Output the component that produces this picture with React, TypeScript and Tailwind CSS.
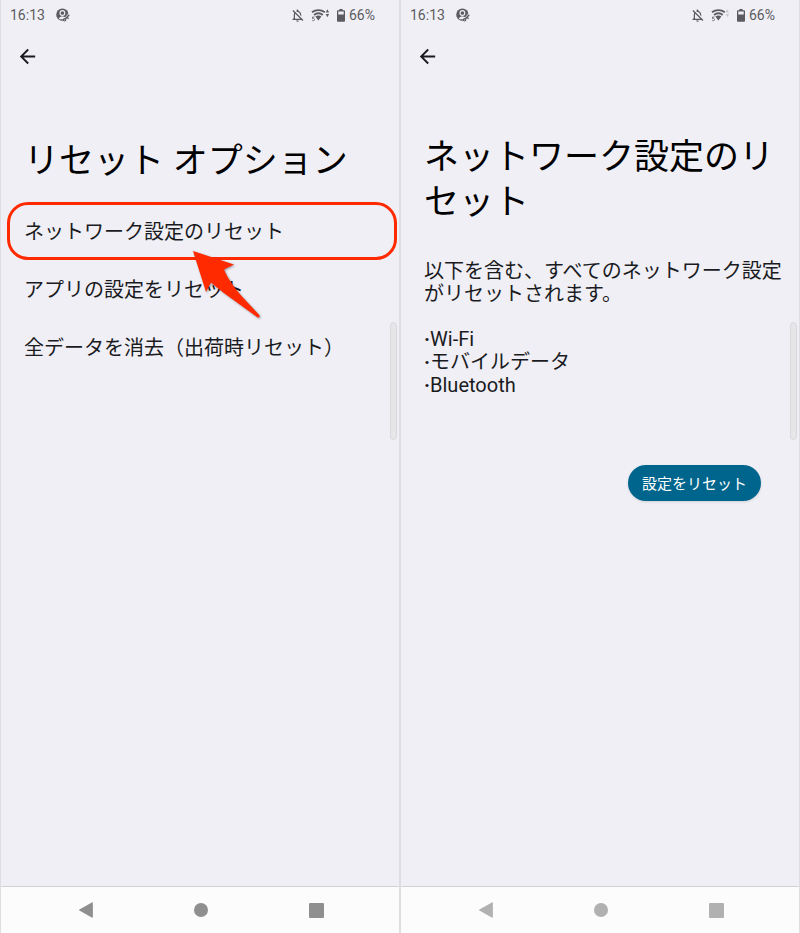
import { ReactNode } from "react";
import { MdArrowBack, MdOutlineNotificationsOff } from "react-icons/md";

type PhoneProps = {
  children: ReactNode;
  wifiActive?: boolean;
  navClassName: string;
};

const resetOptions = [
  { id: "network", label: "ネットワーク設定のリセット", highlighted: true },
  { id: "apps", label: "アプリの設定をリセット" },
  { id: "factory", label: "全データを消去（出荷時リセット）" },
];

const resetTargets = ["Wi-Fi", "モバイルデータ", "Bluetooth"];

const ProfileIcon = () => (
  <svg width="14" height="14" viewBox="0 0 14 14" fill="none">
    <circle cx="6.4" cy="6.7" r="6.2" fill="currentColor" />
    <circle cx="6.4" cy="5" r="2.4" stroke="#f0eff5" strokeWidth="1.1" />
    <path
      d="M2.8 10.4c.9-1.5 2.1-2 3.6-2s2.7.5 3.6 2c-1.6 1.2-5.6 1.2-7.2 0Z"
      fill="#f0eff5"
    />
    <path d="M7.8 13.6 14 6.2" stroke="#f0eff5" strokeWidth="3.4" />
    <path d="M8.8 11.4 13.2 6.8" stroke="currentColor" strokeWidth="1.5" />
    <circle cx="8.6" cy="11.8" r="1.2" stroke="currentColor" strokeWidth="1.1" />
    <path d="m11 9.2 1.6 1.6" stroke="currentColor" strokeWidth="1.3" />
  </svg>
);

const WifiIcon = ({ active }: { active: boolean }) => (
  <svg width="20" height="14" viewBox="0 0 20 14" fill="none">
    <path
      d="M1 4.3C2.9 2.8 5 2.1 7.4 2.1s4.5.7 6.4 2.2"
      stroke="currentColor"
      strokeWidth="1.9"
    />
    <path
      d="M3.1 7C4.4 5.9 5.8 5.3 7.4 5.3s3 .6 4.3 1.7"
      stroke="currentColor"
      strokeWidth="2"
    />
    <path d="M4.4 8.4C6.2 7.1 8.6 7.1 10.4 8.4L7.4 12.4Z" fill="currentColor" />
    <path
      d="M3.4 9H1.5v1.5c1.1-.4 2 0 2 1.1 0 1.1-1.4 1.4-2.3.7"
      stroke="currentColor"
      strokeWidth="0.8"
    />
    <g opacity={active ? 1 : 0.25} fill="currentColor">
      <path d="m16.4 1.2 1.7 3.3h-3.4Z" />
      <path d="m16.4 9.2 1.7-3.3h-3.4Z" />
    </g>
  </svg>
);

const BatteryIcon = () => (
  <svg width="8" height="13" viewBox="0 0 8 13">
    <path
      d="M2.4 0h3.2v1.3H7c.6 0 1 .4 1 1v9.4c0 .7-.4 1-1 1H1c-.6 0-1-.3-1-1V2.3c0-.6.4-1 1-1h1.4ZM1.3 2.6v2.9h5.4V2.6Z"
      fill="currentColor"
      fillRule="evenodd"
    />
  </svg>
);

const StatusBar = ({ wifiActive }: { wifiActive: boolean }) => (
  <header className="flex h-[30px] items-center justify-between pl-[9px] pr-6 text-sm text-[#5c5c60]">
    <div className="flex items-center gap-[11px]">
      <span>16:13</span>
      <ProfileIcon />
    </div>
    <div className="flex items-center">
      <MdOutlineNotificationsOff size={15} />
      <span className="ml-[6px]">
        <WifiIcon active={wifiActive} />
      </span>
      <span className="ml-[6px] mr-1">
        <BatteryIcon />
      </span>
      <span>66%</span>
    </div>
  </header>
);

const Phone = ({ children, wifiActive = false, navClassName }: PhoneProps) => {
  return (
    <section className="relative flex min-w-0 flex-1 flex-col border-x border-[#dedde2] bg-[#f0eff5]">
      <StatusBar wifiActive={wifiActive} />
      <div className="flex px-[15px] pt-[15px]">
        <button aria-label="戻る" className="text-[#1a1b1e]">
          <MdArrowBack size={23} />
        </button>
      </div>
      <main className="flex-1 px-[23px]">{children}</main>
      <div className="absolute right-[2px] top-[322px] h-[118px] w-[7px] rounded-full border border-[#d9d9dd] bg-[#e6e6e9]" />
      <nav
        className={`grid h-[47px] grid-cols-3 items-center justify-items-center border-t border-[#d2d2d6] bg-[#fcfcfc] pl-[27px] pr-[25px] ${navClassName}`}
      >
        <button aria-label="前の画面">
          <svg width="14" height="16" viewBox="0 0 14 16">
            <path
              d="M.4 7.5 12.8.4c.6-.3 1.1 0 1.1.6v14c0 .6-.5.9-1.1.6L.4 8.5c-.5-.3-.5-.7 0-1Z"
              fill="currentColor"
            />
          </svg>
        </button>
        <button
          aria-label="ホーム"
          className="size-[14px] rounded-full bg-current"
        />
        <button
          aria-label="最近使ったアプリ"
          className="size-[15px] rounded-[1px] bg-current"
        />
      </nav>
    </section>
  );
};

const PointerArrow = () => (
  <svg
    className="pointer-events-none absolute left-[190px] top-12 z-10 drop-shadow-[1px_1px_1px_rgba(0,0,0,0.35)]"
    width="72"
    height="74"
    viewBox="0 0 72 74"
  >
    <path
      d="M2 1 43 14.5 33 19.5C35 24 37 28 39.5 31.5 43 37 47 42 51 46.5L68.2 65C69.2 66.5 68 68.3 66.3 67.3L37 46C31 41.5 25 37 20 32.5L15 42Z"
      fill="#ff2a00"
    />
  </svg>
);

const ResetOptions = () => (
  <>
    <h1 className="pt-[71px] text-[35px] leading-[45px] text-black">
      リセット オプション
    </h1>
    <ul className="-mx-[23px] pt-[18px]">
      {resetOptions.map((option) => (
        <li key={option.id} className="relative">
          <button className="flex h-[58px] w-full items-center px-[23px] pt-[2px] text-left text-xl text-[#1a1b1e]">
            {option.label}
          </button>
          {option.highlighted && (
            <>
              <div className="pointer-events-none absolute inset-y-0 left-[6px] right-[2px] rounded-[21px] border-3 border-[#ff2a00]" />
              <PointerArrow />
            </>
          )}
        </li>
      ))}
    </ul>
  </>
);

const NetworkReset = () => (
  <>
    <h1 className="break-all pt-[67px] text-[35px] leading-[45px] text-black">
      ネットワーク設定のリセット
    </h1>
    <div className="-mr-[14px] pt-[35px] text-xl leading-[23px] text-[#1a1b1e]">
      <p>以下を含む、すべてのネットワーク設定がリセットされます。</p>
      <ul className="pt-[22px]">
        {resetTargets.map((target) => (
          <li key={target}>
            <b>·</b>
            {target}
          </li>
        ))}
      </ul>
    </div>
    <div className="flex justify-end pr-[15px] pt-[68px]">
      <button className="h-9 rounded-full bg-[#00658c] px-[14px] pt-[2px] text-[15px] text-white shadow-sm">
        設定をリセット
      </button>
    </div>
  </>
);

const App = () => {
  return (
    <div
      lang="ja"
      className="flex min-h-screen font-[Roboto,'Noto_Sans_CJK_JP',sans-serif]"
    >
      <Phone wifiActive navClassName="text-[#8f8f8f]">
        <ResetOptions />
      </Phone>
      <Phone navClassName="text-[#b1b1b1]">
        <NetworkReset />
      </Phone>
    </div>
  );
};

export default App;
